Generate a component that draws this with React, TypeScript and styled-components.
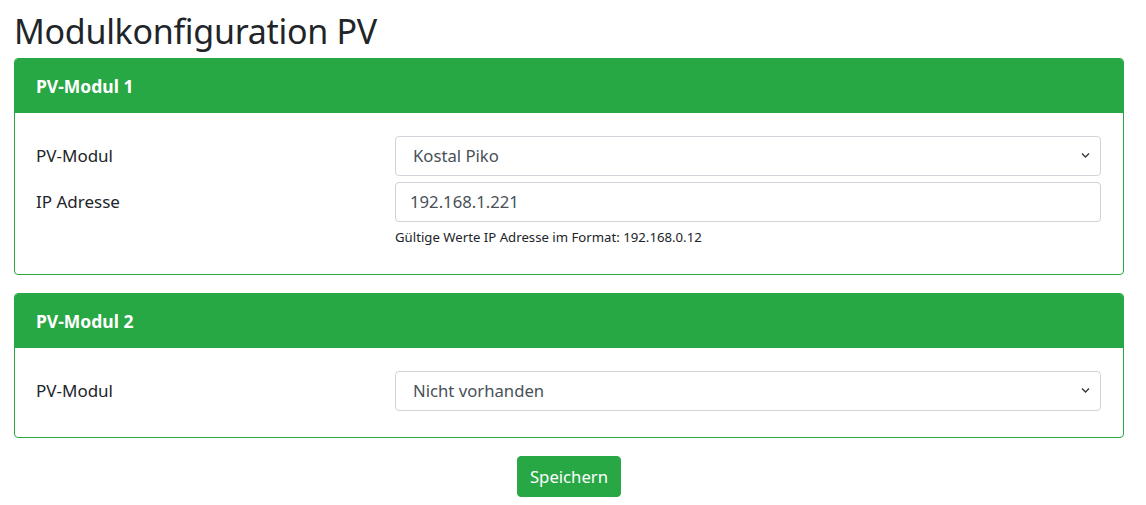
import React from 'react';
import styled, { createGlobalStyle } from 'styled-components';

const GlobalStyle = createGlobalStyle`
  body {
    margin: 0;
    background: #fff;
    color: #212529;
    font-family: 'Noto Sans', 'Open Sans', sans-serif;
    font-size: 16px;
    line-height: 1.5;
  }
`;

const Page = styled.div`
  width: 1110px;
  padding: 0 0 0 14px;
`;

const Title = styled.h1`
  margin: 12px 0 7px 0;
  height: 39px;
  font-size: 34px;
  font-weight: 400;
  line-height: 1.15;
  letter-spacing: -0.3px;
`;

const Card = styled.section`
  border: 1px solid #28a745;
  border-radius: 4px;
  margin-bottom: 18px;
  overflow: hidden;
`;

const CardHeader = styled.div`
  background: #28a745;
  color: #fff;
  font-weight: 700;
  font-size: 17.5px;
  height: 54px;
  display: flex;
  align-items: center;
  padding: 0 21px;
`;

const CardBody = styled.div`
  padding: 23px 21px 26px 21px;
  display: flex;
  flex-direction: column;
  gap: 6px;
`;

const Row = styled.div`
  display: grid;
  grid-template-columns: 359px 706px;
  align-items: start;
`;

const Label = styled.label`
  height: 40px;
  display: flex;
  align-items: center;
  font-size: 17px;
`;

const Field = styled.div`
  position: relative;
`;

const Control = styled.div<{ $select?: boolean }>`
  height: 38px;
  border: 1px solid #ced4da;
  border-radius: 4px;
  display: flex;
  align-items: center;
  padding: 0 ${p => (p.$select ? '17px' : '14px')};
  color: #495057;
  font-size: 16.7px;
  background: #fff;
`;

const Chevron = styled.svg`
  position: absolute;
  right: 11px;
  top: 16px;
  width: 9px;
  height: 7px;
`;

const Help = styled.small`
  display: block;
  margin-top: 6px;
  font-size: 13.2px;
  color: #212529;
`;

const Actions = styled.div`
  display: flex;
  justify-content: center;
`;

const SaveButton = styled.button`
  background: #28a745;
  border: 1px solid #28a745;
  border-radius: 4px;
  color: #fff;
  font-family: inherit;
  font-size: 16.7px;
  width: 104px;
  height: 41px;
  padding: 0;
`;

const Select = ({ value }: { value: string }) => (
  <Field>
    <Control $select>{value}</Control>
    <Chevron viewBox="0 0 9 7">
      <path d="M1 1.5 L4.5 5 L8 1.5" fill="none" stroke="#343a40" strokeWidth="1.4" />
    </Chevron>
  </Field>
);

const App = () => (
  <>
    <GlobalStyle />
    <Page>
      <Title>Modulkonfiguration PV</Title>
      <Card>
        <CardHeader>PV-Modul 1</CardHeader>
        <CardBody>
          <Row>
            <Label>PV-Modul</Label>
            <Select value="Kostal Piko" />
          </Row>
          <Row>
            <Label>IP Adresse</Label>
            <Field>
              <Control>192.168.1.221</Control>
              <Help>Gültige Werte IP Adresse im Format: 192.168.0.12</Help>
            </Field>
          </Row>
        </CardBody>
      </Card>
      <Card>
        <CardHeader>PV-Modul 2</CardHeader>
        <CardBody>
          <Row>
            <Label>PV-Modul</Label>
            <Select value="Nicht vorhanden" />
          </Row>
        </CardBody>
      </Card>
      <Actions>
        <SaveButton>Speichern</SaveButton>
      </Actions>
    </Page>
  </>
);

export default App;
